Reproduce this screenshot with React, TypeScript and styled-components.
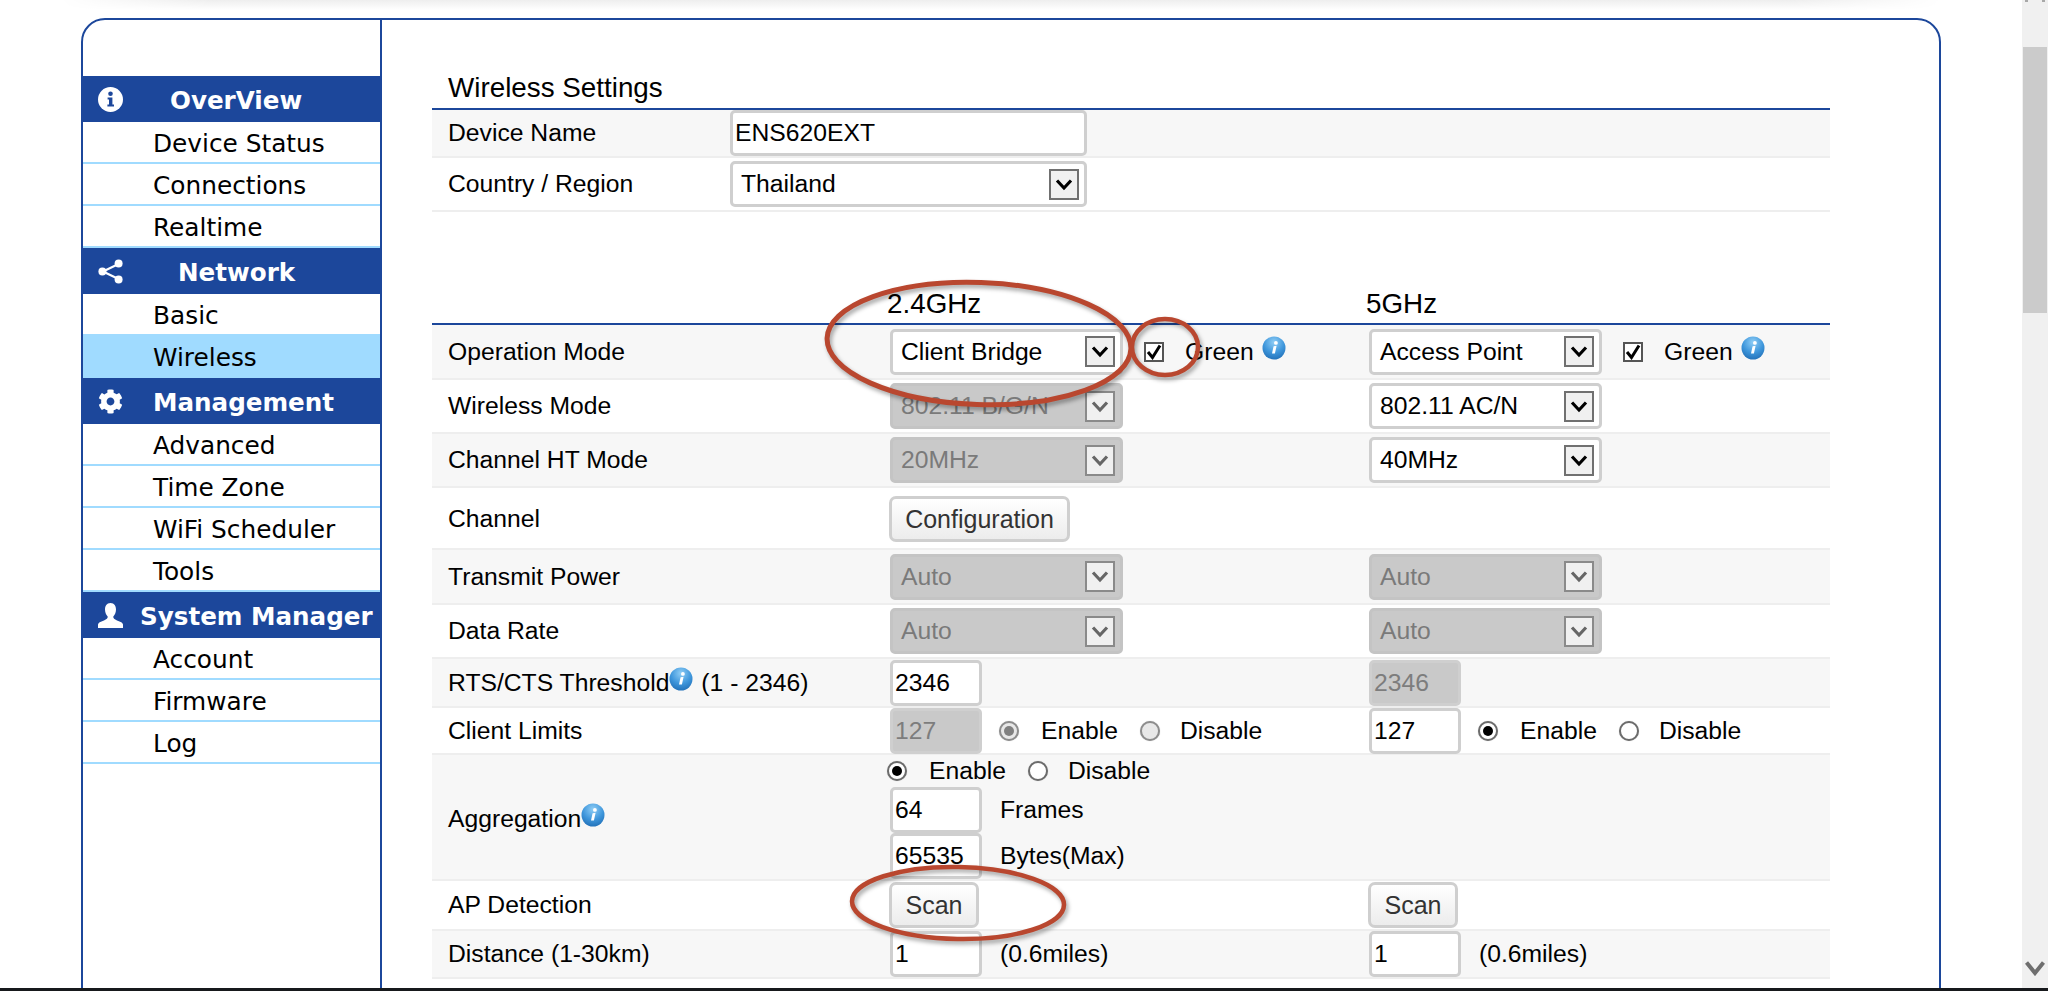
import React from "react";
import styled, { createGlobalStyle } from "styled-components";
import { FaCog } from "react-icons/fa";

const Global = createGlobalStyle`
  html, body { margin: 0; padding: 0; background: #fff; overflow: hidden; }
  * { box-sizing: border-box; }
`;

const BLUE = "#1c479b";
const SKY = "#a0dbff";
const ARIAL = `"Liberation Sans", Arial, sans-serif`;
const VERDANA = `"DejaVu Sans", Verdana, sans-serif`;

const Page = styled.div`
  position: relative;
  width: 2048px;
  height: 991px;
  display: flex;
  flex-direction: column;
  overflow: hidden;
  font-family: ${ARIAL};
  color: #000;
`;
const Body = styled.div`
  flex: 1;
  min-height: 0;
  display: flex;
`;
const Main = styled.div`
  position: relative;
  flex: 1;
  min-width: 0;
  overflow: hidden;
  padding: 18px 0 0 81px;
  &::before {
    content: "";
    position: absolute;
    top: 0;
    left: 60px;
    right: 80px;
    height: 10px;
    background: linear-gradient(#eeeeee, #ffffff);
    -webkit-mask-image: linear-gradient(90deg, transparent, #000 8%, #000 92%, transparent);
  }
`;
const Frame = styled.div`
  width: 1860px;
  height: 1100px;
  border: 2px solid ${BLUE};
  border-radius: 24px 24px 0 0;
  display: flex;
  overflow: hidden;
`;
const Sidebar = styled.nav`
  width: 299px;
  flex: none;
  border-right: 2px solid ${BLUE};
  padding-top: 56px;
  font-family: ${VERDANA};
`;
const GroupHeader = styled.div`
  height: 46px;
  background: ${BLUE};
  color: #fff;
  display: flex;
  align-items: center;
  padding-left: 15px;
  font-weight: 700;
  font-size: 24.6px;
  white-space: nowrap;
`;
const GroupIcon = styled.span`
  width: 25px;
  height: 25px;
  flex: none;
  display: flex;
  svg { display: block; }
`;
const GroupLabel = styled.span<{ $left: number }>`
  margin-left: ${(p) => p.$left}px;
  padding-top: 2px;
`;
const Item = styled.div<{ $active?: boolean }>`
  height: 42px;
  padding-left: 70px;
  display: flex;
  align-items: center;
  font-size: 24.8px;
  padding-top: 2px;
  background: ${(p) => (p.$active ? SKY : "#fff")};
  border-bottom: 2px solid ${SKY};
`;

const Content = styled.div`
  flex: 1;
  padding-left: 50px;
`;
const Sheet = styled.div`
  width: 1398px;
`;
const Title = styled.div`
  height: 90px;
  display: flex;
  align-items: flex-end;
  padding: 0 0 3px 16px;
  font-size: 27.8px;
  line-height: 34px;
  border-bottom: 2px solid ${BLUE};
`;
const BandHeader = styled.div`
  height: 113px;
  display: grid;
  grid-template-columns: 458px 479px 1fr;
  align-items: end;
  padding-bottom: 2px;
  font-size: 27.8px;
  line-height: 34px;
  border-bottom: 2px solid ${BLUE};
`;
const BandName = styled.span`
  margin-left: -3px;
`;
const Row = styled.div<{ $h: number; $shade?: boolean }>`
  height: ${(p) => p.$h}px;
  display: grid;
  grid-template-columns: 458px 479px 1fr;
  align-items: center;
  background: ${(p) => (p.$shade ? "#f7f7f7" : "#fff")};
  border-bottom: 2px solid #eeeeee;
  font-size: 24.7px;
`;
const WideRow = styled(Row)`
  grid-template-columns: 298px 1fr;
`;
const Label = styled.div<{ $drop?: number }>`
  padding-left: 16px;
  padding-top: ${(p) => p.$drop ?? 0}px;
  display: flex;
  align-items: center;
  white-space: nowrap;
`;
const After = styled.span`
  margin-left: 8px;
`;
const Cell = styled.div`
  display: flex;
  align-items: center;
  white-space: nowrap;
`;
const Stack = styled.div`
  display: flex;
  flex-direction: column;
`;
const RadioLine = styled.div`
  height: 32px;
  display: flex;
  align-items: center;
  margin-left: -3px;
`;
const InputLine = styled.div`
  display: flex;
  align-items: center;
`;
const TextInput = styled.input<{ $w?: number }>`
  width: ${(p) => p.$w ?? 92}px;
  height: 46px;
  flex: none;
  border: 3px solid #cfcfcf;
  border-radius: 5px;
  padding: 0 0 0 2px;
  margin: 0;
  font: 24.7px ${ARIAL};
  color: #000;
  background: #fff;
  outline: none;
  &:disabled {
    background: #c9c9c9;
    color: #7d7d7d;
    -webkit-text-fill-color: #7d7d7d;
    opacity: 1;
  }
`;
const SelectBox = styled.div<{ $w?: number; $off?: boolean }>`
  width: ${(p) => p.$w ?? 233}px;
  height: 46px;
  flex: none;
  display: flex;
  align-items: center;
  justify-content: space-between;
  border: 3px solid ${(p) => (p.$off ? "#c4c4c4" : "#cfcfcf")};
  border-radius: 5px;
  padding: 0 5px 0 8px;
  background: ${(p) => (p.$off ? "#c9c9c9" : "#fff")};
  color: ${(p) => (p.$off ? "#7a7a7a" : "#000")};
`;
const Arrow = styled.span<{ $off?: boolean }>`
  width: 30px;
  height: 31px;
  flex: none;
  display: flex;
  align-items: center;
  justify-content: center;
  background: #f0f0f0;
  border: 2px solid ${(p) => (p.$off ? "#8a8a8a" : "#707070")};
  color: ${(p) => (p.$off ? "#666" : "#000")};
`;
const Btn = styled.button<{ $w: number; $low?: number }>`
  width: ${(p) => p.$w}px;
  height: 46px;
  padding: 0;
  margin: ${(p) => p.$low ?? 0}px 0 0 -1px;
  border: 3px solid #cfcfcf;
  border-radius: 7px;
  background: linear-gradient(#ffffff, #ececec);
  color: #333;
  font: 25px ${ARIAL};
`;
const Check = styled.span`
  width: 20px;
  height: 20px;
  flex: none;
  margin-left: 21px;
  margin-right: 21px;
  border: 2px solid #555;
  background: #fff;
  display: flex;
  align-items: center;
  justify-content: center;
`;
const Radio = styled.span<{ $on?: boolean; $off?: boolean; $gap: number }>`
  width: 20px;
  height: 20px;
  flex: none;
  margin-right: ${(p) => p.$gap}px;
  border-radius: 50%;
  border: 2px solid ${(p) => (p.$off ? "#8d8d8d" : "#6c6c6c")};
  background: ${(p) => (p.$off ? "#e8e8e8" : "#fff")};
  box-shadow: 0 0 1px #bbb;
  display: flex;
  align-items: center;
  justify-content: center;
  &::after {
    content: "";
    width: 10px;
    height: 10px;
    border-radius: 50%;
    background: ${(p) => (p.$on ? (p.$off ? "#808080" : "#000") : "transparent")};
  }
`;
const RadioGap = styled.span`
  width: 22px;
  flex: none;
`;
const RadioPush = styled.span`
  width: 17px;
  flex: none;
`;
const Unit = styled.span`
  margin-left: 18px;
`;
const InfoWrap = styled.span<{ $ml?: number }>`
  display: flex;
  flex: none;
  margin-left: ${(p) => p.$ml ?? 0}px;
  margin-bottom: 8px;
`;

const ScrollTrack = styled.aside`
  width: 26px;
  flex: none;
  background: #f0f0f0;
  display: flex;
  flex-direction: column;
  align-items: center;
  padding: 0 1px 12px;
`;
const ScrollTicks = styled.span`
  width: 20px;
  height: 2px;
  border-left: 3px solid #a8a8a8;
  border-right: 3px solid #a8a8a8;
`;
const ScrollThumb = styled.div`
  width: 100%;
  height: 266px;
  margin-top: 45px;
  background: #cbcbcb;
`;
const ScrollDown = styled.span`
  margin-top: auto;
  display: flex;
  color: #6e6e6e;
`;
const BottomBar = styled.div`
  height: 3px;
  flex: none;
  background: #17191c;
`;
const Marks = styled.svg`
  position: absolute;
  inset: 0;
  pointer-events: none;
  filter: drop-shadow(2px 3px 2px rgba(0, 0, 0, 0.35));
`;

const Chevron = () => (
  <svg width="18" height="13" viewBox="0 0 18 13" fill="none">
    <path d="M2 2.5 L9 10 L16 2.5" stroke="currentColor" strokeWidth="3.2" />
  </svg>
);
const Tick = () => (
  <svg width="16" height="16" viewBox="0 0 16 16" fill="none">
    <path d="M2 8 L6.5 13.5 L14 1.5" stroke="#000" strokeWidth="3" />
  </svg>
);
const InfoDot = ({ id }: { id: string }) => (
  <svg width="24" height="24" viewBox="0 0 24 24">
    <defs>
      <radialGradient id={id} cx="50%" cy="25%" r="80%">
        <stop offset="0%" stopColor="#8fcdf5" />
        <stop offset="55%" stopColor="#3f97dc" />
        <stop offset="100%" stopColor="#1f6db5" />
      </radialGradient>
    </defs>
    <circle cx="12" cy="12" r="11.5" fill={`url(#${id})`} />
    <path d="M11.6 10.2 L14.6 9.8 L12.9 17.4 L10 17.4 Z" fill="#fff" />
    <circle cx="13.9" cy="6.9" r="1.9" fill="#fff" />
  </svg>
);
const IconInfo = () => (
  <svg width="25" height="25" viewBox="0 0 25 25">
    <circle cx="12.5" cy="12.5" r="12.5" fill="#fff" />
    <circle cx="12.5" cy="6.8" r="2.3" fill={BLUE} />
    <path d="M9.6 10.4 H14.4 V17.6 H16 V19.6 H9.4 V17.6 H11 V12.4 H9.6 Z" fill={BLUE} />
  </svg>
);
const IconShare = () => (
  <svg width="25" height="25" viewBox="0 0 25 25">
    <path d="M20.5 5 L5 12.5 L20.5 20" stroke="#fff" strokeWidth="2.2" fill="none" />
    <circle cx="20.6" cy="4.6" r="4" fill="#fff" />
    <circle cx="4.4" cy="12.5" r="4" fill="#fff" />
    <circle cx="20.6" cy="20.4" r="4" fill="#fff" />
  </svg>
);
const IconUser = () => (
  <svg width="25" height="25" viewBox="0 0 25 25">
    <path
      d="M12.5 0 C16.4 0 18 3 18 6.6 C18 9.6 16.6 12.3 15.3 13.6 C15.1 15.6 16.4 16.4 19 17.4 C22.6 18.8 25 19.6 25 21.6 V25 H0 V21.6 C0 19.6 2.4 18.8 6 17.4 C8.6 16.4 9.9 15.6 9.7 13.6 C8.4 12.3 7 9.6 7 6.6 C7 3 8.6 0 12.5 0 Z"
      fill="#fff"
    />
  </svg>
);

const Select = ({ v, w, off }: { v: string; w?: number; off?: boolean }) => (
  <SelectBox $w={w} $off={off}>
    <span>{v}</span>
    <Arrow $off={off}>
      <Chevron />
    </Arrow>
  </SelectBox>
);
const Green = ({ id }: { id: string }) => (
  <>
    <Check>
      <Tick />
    </Check>
    <span>Green</span>
    <InfoWrap $ml={8}>
      <InfoDot id={id} />
    </InfoWrap>
  </>
);
const EnableDisable = ({ off }: { off?: boolean }) => (
  <>
    <Radio $on $off={off} $gap={22} />
    <span>Enable</span>
    <RadioGap />
    <Radio $off={off} $gap={20} />
    <span>Disable</span>
  </>
);

const groups = [
  { icon: <IconInfo />, name: "OverView", left: 47, items: ["Device Status", "Connections", "Realtime"] },
  { icon: <IconShare />, name: "Network", left: 55, items: ["Basic", "Wireless"] },
  {
    icon: <FaCog size={25} color="#fff" />,
    name: "Management",
    left: 30,
    items: ["Advanced", "Time Zone", "WiFi Scheduler", "Tools"],
  },
  { icon: <IconUser />, name: "System Manager", left: 17, items: ["Account", "Firmware", "Log"] },
];

export default function App() {
  return (
    <Page>
      <Global />
      <Body>
        <Main>
          <Frame>
            <Sidebar>
              {groups.map((g) => (
                <div key={g.name}>
                  <GroupHeader>
                    <GroupIcon>{g.icon}</GroupIcon>
                    <GroupLabel $left={g.left}>{g.name}</GroupLabel>
                  </GroupHeader>
                  {g.items.map((i) => (
                    <Item key={i} $active={i === "Wireless"}>
                      {i}
                    </Item>
                  ))}
                </div>
              ))}
            </Sidebar>
            <Content>
              <Sheet>
                <Title>Wireless Settings</Title>
                <WideRow $h={48} $shade>
                  <Label>Device Name</Label>
                  <Cell>
                    <TextInput $w={357} defaultValue="ENS620EXT" />
                  </Cell>
                </WideRow>
                <WideRow $h={54}>
                  <Label>Country / Region</Label>
                  <Cell>
                    <Select v="Thailand" w={357} />
                  </Cell>
                </WideRow>
                <BandHeader>
                  <span />
                  <BandName>2.4GHz</BandName>
                  <BandName>5GHz</BandName>
                </BandHeader>
                <Row $h={55} $shade>
                  <Label>Operation Mode</Label>
                  <Cell>
                    <Select v="Client Bridge" />
                    <Green id="ig1" />
                  </Cell>
                  <Cell>
                    <Select v="Access Point" />
                    <Green id="ig2" />
                  </Cell>
                </Row>
                <Row $h={54}>
                  <Label>Wireless Mode</Label>
                  <Cell>
                    <Select v="802.11 B/G/N" off />
                  </Cell>
                  <Cell>
                    <Select v="802.11 AC/N" />
                  </Cell>
                </Row>
                <Row $h={54} $shade>
                  <Label>Channel HT Mode</Label>
                  <Cell>
                    <Select v="20MHz" off />
                  </Cell>
                  <Cell>
                    <Select v="40MHz" />
                  </Cell>
                </Row>
                <Row $h={62}>
                  <Label $drop={1}>Channel</Label>
                  <Cell>
                    <Btn $w={181} $low={2}>Configuration</Btn>
                  </Cell>
                </Row>
                <Row $h={55} $shade>
                  <Label>Transmit Power</Label>
                  <Cell>
                    <Select v="Auto" off />
                  </Cell>
                  <Cell>
                    <Select v="Auto" off />
                  </Cell>
                </Row>
                <Row $h={54}>
                  <Label>Data Rate</Label>
                  <Cell>
                    <Select v="Auto" off />
                  </Cell>
                  <Cell>
                    <Select v="Auto" off />
                  </Cell>
                </Row>
                <Row $h={49} $shade>
                  <Label>
                    RTS/CTS Threshold
                    <InfoWrap>
                      <InfoDot id="ig3" />
                    </InfoWrap>
                    <After>(1 - 2346)</After>
                  </Label>
                  <Cell>
                    <TextInput defaultValue="2346" />
                  </Cell>
                  <Cell>
                    <TextInput disabled defaultValue="2346" />
                  </Cell>
                </Row>
                <Row $h={47}>
                  <Label>Client Limits</Label>
                  <Cell>
                    <TextInput disabled defaultValue="127" />
                    <RadioPush />
                    <EnableDisable off />
                  </Cell>
                  <Cell>
                    <TextInput defaultValue="127" />
                    <RadioPush />
                    <EnableDisable />
                  </Cell>
                </Row>
                <Row $h={126} $shade>
                  <Label $drop={3}>
                    Aggregation
                    <InfoWrap>
                      <InfoDot id="ig4" />
                    </InfoWrap>
                  </Label>
                  <Stack>
                    <RadioLine>
                      <EnableDisable />
                    </RadioLine>
                    <InputLine>
                      <TextInput defaultValue="64" />
                      <Unit>Frames</Unit>
                    </InputLine>
                    <InputLine>
                      <TextInput defaultValue="65535" />
                      <Unit>Bytes(Max)</Unit>
                    </InputLine>
                  </Stack>
                </Row>
                <Row $h={50}>
                  <Label>AP Detection</Label>
                  <Cell>
                    <Btn $w={90}>Scan</Btn>
                  </Cell>
                  <Cell>
                    <Btn $w={90}>Scan</Btn>
                  </Cell>
                </Row>
                <Row $h={48} $shade>
                  <Label>Distance (1-30km)</Label>
                  <Cell>
                    <TextInput defaultValue="1" />
                    <Unit>(0.6miles)</Unit>
                  </Cell>
                  <Cell>
                    <TextInput defaultValue="1" />
                    <Unit>(0.6miles)</Unit>
                  </Cell>
                </Row>
              </Sheet>
            </Content>
          </Frame>
        </Main>
        <ScrollTrack>
          <ScrollTicks />
          <ScrollThumb />
          <ScrollDown>
            <svg width="20" height="15" viewBox="0 0 20 15" fill="none">
              <path d="M1.5 1.5 L10 12 L18.5 1.5" stroke="currentColor" strokeWidth="4" />
            </svg>
          </ScrollDown>
        </ScrollTrack>
      </Body>
      <BottomBar />
      <Marks width="2048" height="991" viewBox="0 0 2048 991" fill="none" stroke="#b9472f">
        <ellipse cx="979" cy="343.5" rx="152" ry="61" strokeWidth="5" transform="rotate(2 979 343.5)" />
        <ellipse cx="1165" cy="347" rx="33" ry="28" strokeWidth="4.5" />
        <ellipse cx="958" cy="903" rx="106" ry="36" strokeWidth="4.5" transform="rotate(1 958 903)" />
      </Marks>
    </Page>
  );
}
